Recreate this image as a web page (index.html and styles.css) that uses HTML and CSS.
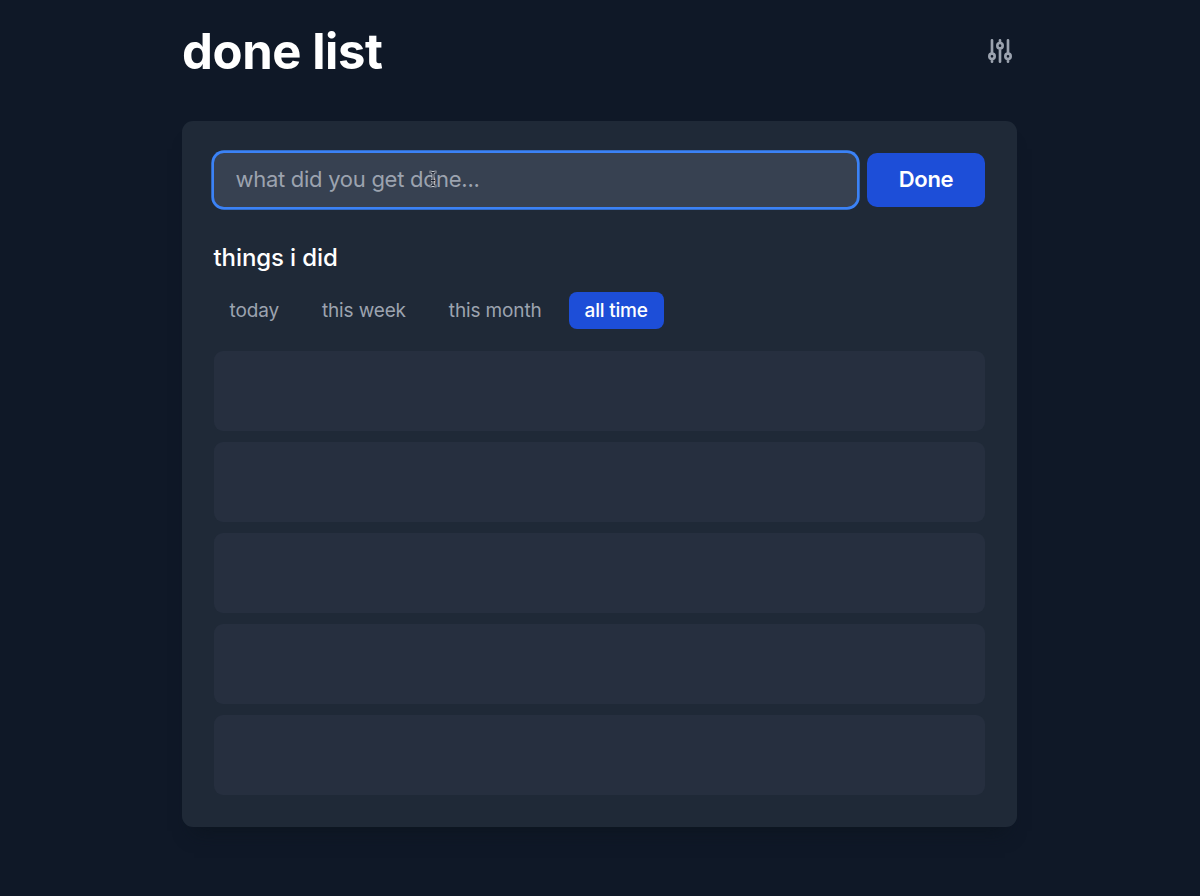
FILE: index.html
```html
<!DOCTYPE html>
<html lang="en">
<head>
<meta charset="utf-8">
<title>done list</title>
<link rel="stylesheet" href="styles.css">
</head>
<body>
<main class="page">
  <header class="header">
    <h1 class="title">done list</h1>
    <button class="settings" type="button" aria-label="Settings">
      <svg class="settings-icon" viewBox="0 0 24 24" fill="none" stroke="currentColor" stroke-width="2" stroke-linecap="round" stroke-linejoin="round"><path d="M12 6V4m0 2a2 2 0 100 4m0-4a2 2 0 110 4m-6 8a2 2 0 100-4m0 4a2 2 0 110-4m0 4v2m0-6V4m6 6v10m6-2a2 2 0 100-4m0 4a2 2 0 110-4m0 4v2m0-6V4"/></svg>
    </button>
  </header>
  <section class="card">
    <form class="entry">
      <div class="field">
        <input class="input" type="text" placeholder="what did you get done...">
        <svg class="pointer" viewBox="0 0 10 18" fill="none"><path class="pointer-edge" d="M1.500 2H3Q5 2 5 4.500Q5 2 7 2H8.500M5 4V14M1.500 16H3Q5 16 5 13.500Q5 16 7 16H8.500M3.200 10.500H6.800"/><path class="pointer-core" d="M1.500 2H3Q5 2 5 4.500Q5 2 7 2H8.500M5 4V14M1.500 16H3Q5 16 5 13.500Q5 16 7 16H8.500M3.200 10.500H6.800"/></svg>
      </div>
      <button class="submit" type="button">Done</button>
    </form>
    <h2 class="subtitle">things i did</h2>
    <nav class="tabs">
      <button class="tab" type="button">today</button>
      <button class="tab" type="button">this week</button>
      <button class="tab" type="button">this month</button>
      <button class="tab tab-active" type="button">all time</button>
    </nav>
    <ul class="list">
      <li class="item"></li>
      <li class="item"></li>
      <li class="item"></li>
      <li class="item"></li>
      <li class="item"></li>
    </ul>
  </section>
</main>
</body>
</html>
```
FILE: styles.css
```css
* { box-sizing: border-box; }
body {
  margin: 0;
  height: 896px;
  overflow: hidden;
  background: #0f1827;
  color: #fff;
  font-family: Inter, "Liberation Sans", sans-serif;
}
button, input { font: inherit; color: inherit; border: 0; margin: 0; }
.page { width: 835px; margin-left: 182px; }
.header {
  display: flex;
  align-items: center;
  justify-content: space-between;
  height: 102px;
  margin-bottom: 18.5px;
}
.title {
  margin: 0;
  padding-top: 2px;
  font-size: 49px;
  line-height: 60px;
  font-weight: 700;
  letter-spacing: -0.4px;
}
.settings { display: flex; padding: 0 1px 0 0; background: none; color: #9ca3af; }
.settings-icon { width: 32px; height: 32px; }
.card {
  height: 706.5px;
  padding: 32px 32px 0 31.5px;
  border-radius: 11px;
  background: #1f2937;
  box-shadow: 0 16px 18px -12px rgba(12, 20, 28, 0.7);
}
.entry { display: flex; gap: 10.5px; height: 54px; }
.field { position: relative; flex: 1; }
.input {
  width: 100%;
  height: 54px;
  padding: 0 22px 2px;
  border-radius: 10px;
  outline: 0;
  background: #374151;
  box-shadow: 0 0 0 2.7px #3b82f6;
  font-size: 22px;
  letter-spacing: -0.28px;
}
.input::placeholder { color: #9ca3af; opacity: 1; }
.pointer { position: absolute; left: 214px; top: 17.5px; width: 10px; height: 18px; }
.pointer-edge { stroke: #d7dbe0; stroke-width: 2.6; }
.pointer-core { stroke: #111827; stroke-width: 1.1; }
.submit {
  width: 118px;
  padding: 0 0 2px;
  border-radius: 10px;
  background: #1d4ed8;
  font-size: 22px;
  font-weight: 600;
  letter-spacing: -0.3px;
}
.subtitle {
  margin: 35px 0 0;
  font-size: 24px;
  line-height: 32px;
  font-weight: 500;
  letter-spacing: -0.1px;
}
.tabs { display: flex; gap: 10.9px; margin-top: 18px; }
.tab {
  height: 37.5px;
  padding: 0 16px;
  border-radius: 8px;
  background: none;
  color: #9ca3af;
  font-size: 19px;
  letter-spacing: -0.13px;
}
.tab-active { background: #1d4ed8; color: #fff; font-weight: 500; letter-spacing: -0.2px; }
.list { display: grid; gap: 11px; margin: 21.5px 0 0; padding: 0; list-style: none; }
.item { height: 80px; border-radius: 9px; background: #262f3f; }
```
